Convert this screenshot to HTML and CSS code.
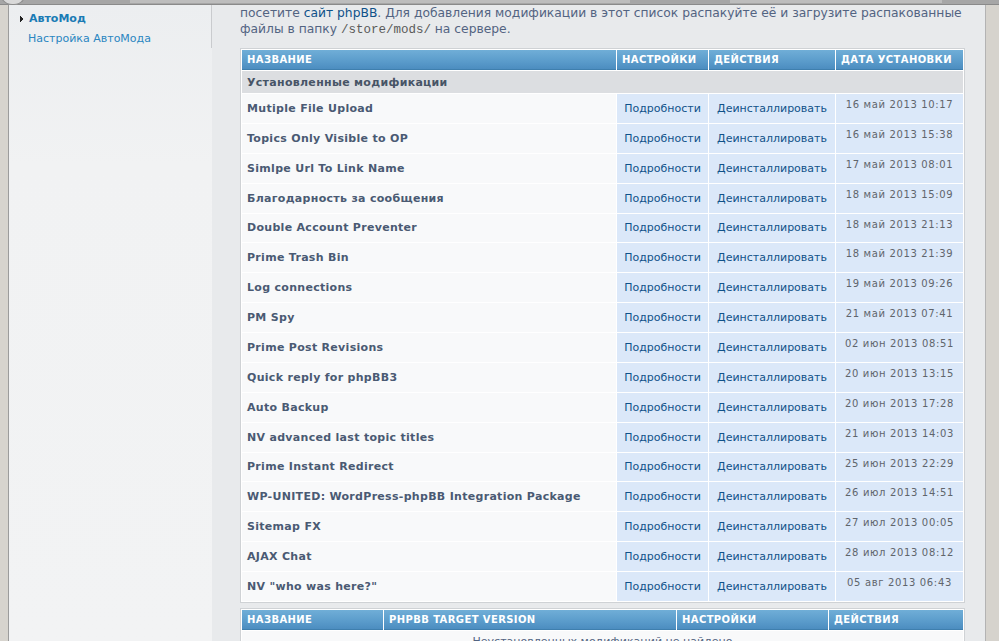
FILE: index.html
```html
<!DOCTYPE html>
<html lang="ru">
<head>
<meta charset="utf-8">
<title>АвтоМод</title>
<link rel="stylesheet" href="styles.css">
</head>
<body>
<div class="topbar"><span class="knob"></span><span class="seg seg-a"></span><span class="seg seg-b"></span></div>
<div class="window">
  <div class="frame-left"></div>
  <div class="page">
    <aside class="sidebar">
      <ul class="menu">
        <li class="menu-head"><svg class="arrow" width="4" height="6" viewBox="0 0 4 6"><rect x="0" y="0" width="1" height="6" fill="#222"/><rect x="1" y="1" width="1" height="4" fill="#222"/><rect x="2" y="2" width="1" height="2" fill="#222"/></svg>АвтоМод</li>
        <li class="menu-item"><a href="#">Настройка АвтоМода</a></li>
      </ul>
    </aside>
    <main class="main">
      <p class="intro">посетите <a href="#">сайт phpBB</a>. Для добавления модификации в этот список распакуйте её и загрузите распакованные<br>файлы в папку <code>/store/mods/</code> на сервере.</p>

      <table class="grid grid-installed">
        <colgroup><col class="c-name"><col class="c-set"><col class="c-act"><col class="c-date"></colgroup>
        <thead>
          <tr><th>Название</th><th>Настройки</th><th>Действия</th><th>Дата установки</th></tr>
        </thead>
        <tbody>
          <tr class="section"><td colspan="4">Установленные модификации</td></tr>
          <tr class="mod"><td class="name">Mutiple File Upload</td><td class="link"><a href="#">Подробности</a></td><td class="link"><a href="#">Деинсталлировать</a></td><td class="date">16 май 2013 10:17</td></tr>
          <tr class="mod"><td class="name">Topics Only Visible to OP</td><td class="link"><a href="#">Подробности</a></td><td class="link"><a href="#">Деинсталлировать</a></td><td class="date">16 май 2013 15:38</td></tr>
          <tr class="mod"><td class="name">Simlpe Url To Link Name</td><td class="link"><a href="#">Подробности</a></td><td class="link"><a href="#">Деинсталлировать</a></td><td class="date">17 май 2013 08:01</td></tr>
          <tr class="mod"><td class="name">Благодарность за сообщения</td><td class="link"><a href="#">Подробности</a></td><td class="link"><a href="#">Деинсталлировать</a></td><td class="date">18 май 2013 15:09</td></tr>
          <tr class="mod"><td class="name">Double Account Preventer</td><td class="link"><a href="#">Подробности</a></td><td class="link"><a href="#">Деинсталлировать</a></td><td class="date">18 май 2013 21:13</td></tr>
          <tr class="mod"><td class="name">Prime Trash Bin</td><td class="link"><a href="#">Подробности</a></td><td class="link"><a href="#">Деинсталлировать</a></td><td class="date">18 май 2013 21:39</td></tr>
          <tr class="mod"><td class="name">Log connections</td><td class="link"><a href="#">Подробности</a></td><td class="link"><a href="#">Деинсталлировать</a></td><td class="date">19 май 2013 09:26</td></tr>
          <tr class="mod"><td class="name">PM Spy</td><td class="link"><a href="#">Подробности</a></td><td class="link"><a href="#">Деинсталлировать</a></td><td class="date">21 май 2013 07:41</td></tr>
          <tr class="mod"><td class="name">Prime Post Revisions</td><td class="link"><a href="#">Подробности</a></td><td class="link"><a href="#">Деинсталлировать</a></td><td class="date">02 июн 2013 08:51</td></tr>
          <tr class="mod"><td class="name">Quick reply for phpBB3</td><td class="link"><a href="#">Подробности</a></td><td class="link"><a href="#">Деинсталлировать</a></td><td class="date">20 июн 2013 13:15</td></tr>
          <tr class="mod"><td class="name">Auto Backup</td><td class="link"><a href="#">Подробности</a></td><td class="link"><a href="#">Деинсталлировать</a></td><td class="date">20 июн 2013 17:28</td></tr>
          <tr class="mod"><td class="name">NV advanced last topic titles</td><td class="link"><a href="#">Подробности</a></td><td class="link"><a href="#">Деинсталлировать</a></td><td class="date">21 июн 2013 14:03</td></tr>
          <tr class="mod"><td class="name">Prime Instant Redirect</td><td class="link"><a href="#">Подробности</a></td><td class="link"><a href="#">Деинсталлировать</a></td><td class="date">25 июн 2013 22:29</td></tr>
          <tr class="mod"><td class="name">WP-UNITED: WordPress-phpBB Integration Package</td><td class="link"><a href="#">Подробности</a></td><td class="link"><a href="#">Деинсталлировать</a></td><td class="date">26 июл 2013 14:51</td></tr>
          <tr class="mod"><td class="name">Sitemap FX</td><td class="link"><a href="#">Подробности</a></td><td class="link"><a href="#">Деинсталлировать</a></td><td class="date">27 июл 2013 00:05</td></tr>
          <tr class="mod"><td class="name">AJAX Chat</td><td class="link"><a href="#">Подробности</a></td><td class="link"><a href="#">Деинсталлировать</a></td><td class="date">28 июл 2013 08:12</td></tr>
          <tr class="mod"><td class="name">NV "who was here?"</td><td class="link"><a href="#">Подробности</a></td><td class="link"><a href="#">Деинсталлировать</a></td><td class="date">05 авг 2013 06:43</td></tr>
        </tbody>
      </table>

      <table class="grid grid-uninstalled">
        <colgroup><col class="u-name"><col class="u-ver"><col class="u-set"><col class="u-act"></colgroup>
        <thead>
          <tr><th>Название</th><th>phpBB target version</th><th>Настройки</th><th>Действия</th></tr>
        </thead>
        <tbody>
          <tr class="empty"><td colspan="4">Неустановленных модификаций не найдено</td></tr>
        </tbody>
      </table>
    </main>
  </div>
  <div class="frame-right"></div>
</div>
</body>
</html>
```

FILE: styles.css
```css
html, body {
  margin: 0;
  padding: 0;
  height: 100%;
  overflow: hidden;
}

body {
  font-family: "DejaVu Sans", Verdana, sans-serif;
  background: #e8eaec;
  color: #536482;
}

.topbar {
  height: 4px;
  background: #a6a6a6;
  border-bottom: 1px solid #8a8a8a;
  display: flex;
  position: relative;
}

.knob {
  position: absolute;
  left: 0;
  top: -10px;
  width: 24px;
  height: 14px;
  border-radius: 0 0 12px 12px;
  background: #d9d9d9;
  border: 1px solid #8d8d8d;
  border-top: none;
}

.seg {
  height: 3px;
  background: #bdbdbd;
}

.seg-a { margin-left: 130px; width: 500px; }
.seg-b { margin-left: 100px; width: 212px; }

.window {
  display: flex;
  height: calc(100% - 5px);
}

.frame-left {
  width: 8px;
  background: #d7d4ce;
  border-right: 1px solid #9c9c9c;
  flex: none;
}

.frame-right {
  width: 13px;
  background: #d6d3cd;
  border-left: 1px solid #b3b3b3;
  flex: none;
}

.page {
  flex: 1;
  display: flex;
  background: #e8eaec;
  min-width: 0;
}

.sidebar {
  width: 203px;
  flex: none;
  background: linear-gradient(#eceef0 0, #f1f2f3 160px, #f2f3f4 100%);
}

.menu {
  list-style: none;
  margin: 0;
  padding: 7px 0 0 0;
  border-right: 1px solid #c9cbce;
  height: 36px;
}

.menu-head {
  font-size: 11px;
  font-weight: bold;
  color: #1a7bb5;
  line-height: 13px;
  padding-left: 11px;
  display: flex;
  align-items: center;
}

.arrow {
  margin-right: 5px;
}

.menu-item {
  font-size: 11px;
  line-height: 13px;
  margin-top: 7px;
  padding-left: 19px;
}

.menu-item a {
  color: #2a86c1;
  text-decoration: none;
}

.main {
  flex: 1;
  padding: 0 21px 0 28px;
  min-width: 0;
}

.intro {
  margin: 0;
  font-size: 12.3px;
  line-height: 16px;
  white-space: nowrap;
  color: #536482;
}

.intro a {
  color: #105289;
  text-decoration: none;
}

.intro code {
  font-family: "Liberation Mono", "DejaVu Sans Mono", monospace;
  font-size: 12.5px;
  color: #5a5a5a;
}

.grid {
  width: 725px;
  table-layout: fixed;
  border-collapse: separate;
  border-spacing: 1px;
  background: #ffffff;
  border: 1px solid #cfd2d5;
}

.grid-installed { margin-top: 10px; }
.grid-uninstalled { margin-top: 5px; }

.c-name { width: 374px; }
.c-set { width: 91px; }
.c-act { width: 126px; }
.c-date { width: 127px; }

.u-name { width: 141px; }
.u-ver { width: 292px; }
.u-set { width: 151px; }
.u-act { width: 134px; }

.grid th {
  height: 20px;
  padding: 0 4px 0 5px;
  text-align: left;
  font-size: 10px;
  font-weight: bold;
  letter-spacing: 0.4px;
  text-transform: uppercase;
  color: #ffffff;
  background: linear-gradient(#70aed7, #5c9dcc 55%, #4c8dc0);
  border-bottom: 1px solid #3f7fae;
  box-sizing: border-box;
  white-space: nowrap;
  overflow: hidden;
}

.grid td {
  font-size: 11px;
  line-height: 13px;
  padding: 0;
}

.section td {
  height: 22px;
  padding-left: 5px;
  background: #dcdee1;
  color: #475466;
  font-weight: bold;
  letter-spacing: 0.3px;
}

.mod {
  height: 28.88px;
}

.name {
  padding-left: 5px !important;
  background: #f8f9fa;
  color: #4a5a73;
  font-weight: bold;
  letter-spacing: 0.3px;
  white-space: nowrap;
}

.link {
  background: #dbe8f9;
  text-align: center;
  white-space: nowrap;
}

.link a {
  color: #105289;
  text-decoration: none;
}

.date {
  background: #dbe8f9;
  text-align: center;
  vertical-align: top;
  padding-top: 4px !important;
  font-size: 10px !important;
  letter-spacing: 0.65px;
  color: #60656c;
  white-space: nowrap;
}

.empty td {
  height: 22px;
  text-align: center;
  background: #f8f9fa;
  color: #536482;
}
```
